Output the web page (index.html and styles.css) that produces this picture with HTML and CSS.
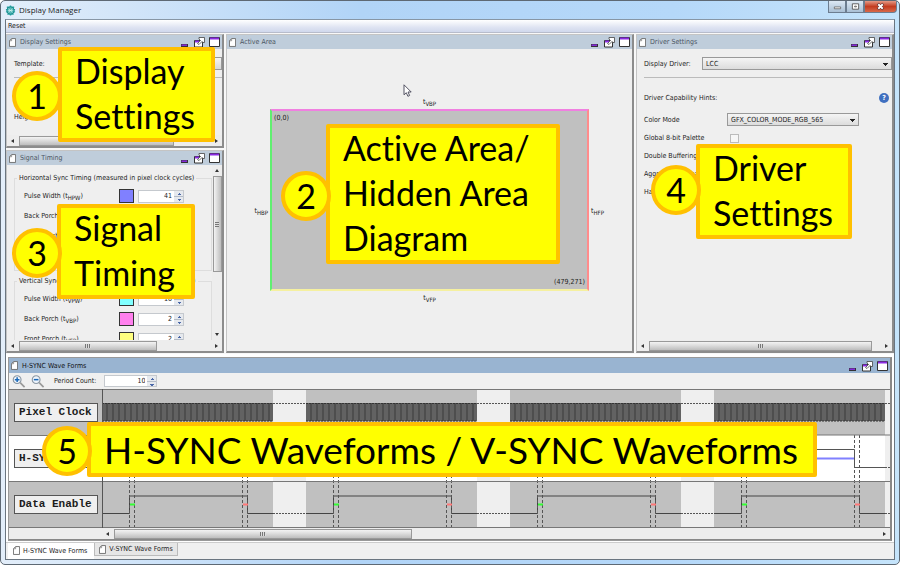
FILE: index.html
```html
<!DOCTYPE html>
<html lang="en">
<head>
<meta charset="utf-8">
<title>Display Manager</title>
<link rel="stylesheet" href="styles.css">
</head>
<body>
<svg class="defs" aria-hidden="true">
  <symbol id="doc" viewBox="0 0 8 10"><path d="M3 .5h4.5v9h-7V3z" fill="#fff" stroke="#666"/><path d="M3 .5V3H.5" fill="none" stroke="#888"/></symbol>
  <symbol id="tools" viewBox="0 0 40 12">
    <path d="M1 9.500h7" stroke="#333" stroke-width="3"/><path d="M1.500 9.200h5.500" stroke="#8a2be2" stroke-width="1.500"/>
    <path d="M14.500 4.500h8v6.500h-8z" fill="#fff" stroke="#333"/><path d="M15 5.500h4" stroke="#8a2be2" stroke-width="2"/>
    <path d="M17.500 7.500l3-3-1.500-1.500V1.500h5.500v5h-1.500l-1-1-3 3z" fill="#fff" stroke="#444" stroke-width=".8"/>
    <path d="M29.500 1.500h10v9h-10z" fill="#fff" stroke="#333"/><path d="M30 2.500h9" stroke="#8a2be2" stroke-width="2"/>
  </symbol>
  <symbol id="zoomglass" viewBox="0 0 15 14"><path d="M8.500 8l5 5" stroke="#999" stroke-width="1.800"/><circle cx="5.500" cy="5" r="4.200" fill="#eef4fb" stroke="#8b97a3" stroke-width="1.200"/></symbol>
</svg>
<main class="window">
  <header class="titlebar">
    <svg class="logo" viewBox="0 0 12 12"><path d="M2 2.500h8M1 5h10M1 7.500h10M2.500 10h7M6 .5v11" stroke="#27a3a3" stroke-width="1.500"/><circle cx="6" cy="6" r="4" fill="#55b9b9" stroke="#168c8c"/><path d="M3.500 6h5M4 4.300l4 3.400M8 4.300L4 7.700" stroke="#d8f2f0" stroke-width=".7"/></svg>
    <h1>Display Manager</h1>
    <div class="winbtns">
      <button aria-label="Minimize"><svg viewBox="0 0 10 10"><path d="M1.500 5.500h7v2h-7z" fill="#fff" stroke="#555" stroke-width=".8"/></svg></button>
      <button aria-label="Maximize"><svg viewBox="0 0 10 10"><path d="M1.500 2h7v6h-7z" fill="#fff" stroke="#555"/><path d="M4 4.500h2v1h-2z" fill="#ddd" stroke="#555" stroke-width=".8"/></svg></button>
      <button class="close" aria-label="Close"><svg viewBox="0 0 10 10"><path d="M2 2l6 6M8 2l-6 6" stroke="#5b3030" stroke-width="3.200"/><path d="M2.500 2.500l5 5M7.500 2.500l-5 5" stroke="#fff" stroke-width="2"/></svg></button>
    </div>
  </header>
  <div class="client">
    <nav class="menubar"><button>Reset</button></nav>
    <div class="workspace">
      <div class="left">
        <section class="panel display">
          <header class="phead"><svg class="doc"><use href="#doc"/></svg><h2>Display Settings</h2><svg class="tools"><use href="#tools"/></svg></header>
          <div class="pbody">
            <div class="drow"><label for="tpl">Template:</label><select id="tpl"><option></option></select></div>
            <hr>
            <div class="drow height"><label for="hgt">Height:</label><input id="hgt" type="text" value="272"></div>
          </div>
          <div class="hscroll"><i class="al"></i><b class="thumb"></b><i class="ar"></i></div>
          <div class="callout c1"><p>Display<br>Settings</p><span>1</span></div>
        </section>
        <section class="panel signal">
          <header class="phead"><svg class="doc"><use href="#doc"/></svg><h2>Signal Timing</h2><svg class="tools"><use href="#tools"/></svg></header>
          <div class="scrollpair">
            <div class="groups">
              <fieldset class="g1"><legend>Horizontal Sync Timing (measured in pixel clock cycles)</legend>
                <div class="srow"><label for="hpw">Pulse Width (t<sub>HPW</sub>)</label><i class="sw blue"></i><span class="spin"><input id="hpw" type="text" value="41"><u></u></span></div>
                <div class="srow"><label for="hbp">Back Porch (t<sub>HBP</sub>)</label><i class="sw green"></i><span class="spin"><input id="hbp" type="text" value="2"><u></u></span></div>
                <div class="srow"><label for="hfp">Front Porch (t<sub>HFP</sub>)</label><i class="sw red"></i><span class="spin"><input id="hfp" type="text" value="2"><u></u></span></div>
              </fieldset>
              <fieldset class="g2"><legend>Vertical Sync Timing (measured in horizontal sync lines)</legend>
                <div class="srow"><label for="vpw">Pulse Width (t<sub>VPW</sub>)</label><i class="sw cyan"></i><span class="spin"><input id="vpw" type="text" value="10"><u></u></span></div>
                <div class="srow"><label for="vbp">Back Porch (t<sub>VBP</sub>)</label><i class="sw pink"></i><span class="spin"><input id="vbp" type="text" value="2"><u></u></span></div>
                <div class="srow"><label for="vfp">Front Porch (t<sub>VFP</sub>)</label><i class="sw yellow"></i><span class="spin"><input id="vfp" type="text" value="2"><u></u></span></div>
              </fieldset>
            </div>
            <div class="vscroll"><i class="au"></i><b class="thumb"></b><i class="ad"></i></div>
          </div>
          <div class="hscroll"><i class="al"></i><b class="thumb grip"></b><i class="ar"></i></div>
          <div class="callout c3"><p>Signal<br>Timing</p><span>3</span></div>
        </section>
      </div>
      <section class="panel active">
        <header class="phead"><svg class="doc"><use href="#doc"/></svg><h2>Active Area</h2><svg class="tools"><use href="#tools"/></svg></header>
        <div class="diagram">
          <div class="edge top">t<sub>VBP</sub></div>
          <div class="edge lft">t<sub>HBP</sub></div>
          <div class="area"><span>(0,0)</span><span class="end">(479,271)</span></div>
          <div class="edge rgt">t<sub>HFP</sub></div>
          <div class="edge bot">t<sub>VFP</sub></div>
        </div>
        <svg class="cursor" viewBox="0 0 9 13"><path d="M1 .8v10l2.300-2.100 1.600 3.600 1.700-.8-1.600-3.500h3.200z" fill="#fff" stroke="#445" stroke-width=".9"/></svg>
        <div class="callout c2"><p>Active Area/<br>Hidden Area<br>Diagram</p><span>2</span></div>
      </section>
      <section class="panel driver">
        <header class="phead"><svg class="doc"><use href="#doc"/></svg><h2>Driver Settings</h2><svg class="tools"><use href="#tools"/></svg></header>
        <div class="pbody">
          <div class="lcc"><label for="drv">Display Driver:</label><select id="drv"><option>LCC</option></select></div>
          <hr>
          <div class="hints"><span>Driver Capability Hints:</span><button class="help" aria-label="Help">?</button></div>
          <div class="mode"><label for="cm">Color Mode</label><select id="cm"><option>GFX_COLOR_MODE_RGB_565</option></select></div>
          <div class="chk"><label for="k1">Global 8-bit Palette</label><input id="k1" type="checkbox" disabled></div>
          <div class="chk"><label for="k2">Double Buffering</label><input id="k2" type="checkbox"></div>
          <div class="chk"><label for="k3">Aggressive Alpha</label><input id="k3" type="checkbox"></div>
          <div class="chk"><label for="k4">Hardware</label><input id="k4" type="checkbox"></div>
        </div>
        <div class="hscroll"><i class="al"></i><b class="thumb grip"></b><i class="ar"></i></div>
        <div class="callout c4"><p>Driver<br>Settings</p><span>4</span></div>
      </section>
    </div>
    <section class="waves">
      <div class="wframe">
        <header class="phead focus"><svg class="doc"><use href="#doc"/></svg><h2>H-SYNC Wave Forms</h2><svg class="tools"><use href="#tools"/></svg></header>
        <div class="toolbar">
          <button aria-label="Zoom in"><svg viewBox="0 0 15 14"><use href="#zoomglass"/><path d="M3 5h5M5.500 2.500v5" stroke="#1767b8" stroke-width="1.600"/></svg></button>
          <button aria-label="Zoom out"><svg viewBox="0 0 15 14"><use href="#zoomglass"/><path d="M3 5h5" stroke="#1767b8" stroke-width="1.600"/></svg></button>
          <label for="pc">Period Count:</label><span class="spin"><input id="pc" type="text" value="10"><u></u></span>
        </div>
        <div class="scope">
          <div class="names"><div><b>Pixel Clock</b></div><div class="white"><b>H-SYNC</b></div><div><b>Data Enable</b></div></div>
          <svg class="plot" viewBox="0 0 788 139" preserveAspectRatio="none">
            <defs>
              <pattern id="clk" width="6" height="18" patternUnits="userSpaceOnUse"><path d="M0 0h6v18h-6z" fill="#4e4e4e"/><path d="M0 0h4v18h-4z" fill="#626262"/></pattern>
              <g id="period">
                <path d="M0 0h171v139h-171z" fill="#c0c0c0"/>
                <path d="M0 46h171v46h-171z" fill="#fff"/>
                <path d="M0 14h171v18h-171z" fill="url(#clk)"/>
                <path d="M0 14.500h171M0 32h171" stroke="#333" stroke-dasharray="2 1"/>
                <path d="M171 14.500h33M171 124.500h33M171 78.500h33" stroke="#555" stroke-dasharray="2 1"/>
                <path d="M0 78.500h28.500v-18h112v18h30.500" fill="none" stroke="#555"/>
                <path d="M28 69.500h112" stroke="#8080ff" stroke-width="2"/>
                <path d="M0 124.500h27.500v-17.500h118v17.500h25.500" fill="none" stroke="#444"/>
                <path d="M27.500 46v93M32.500 46v93M140.500 46v93M145.500 46v93" stroke="#555" stroke-dasharray="3 2"/>
                <path d="M28 115.500h5" stroke="#3f3" stroke-width="2"/>
                <path d="M141 115.500h5" stroke="#f77" stroke-width="2"/>
              </g>
            </defs>
            <path d="M0 0h788v139h-788z" fill="#efefef"/>
            <use href="#period"/><use href="#period" x="204"/><use href="#period" x="408"/><use href="#period" x="612"/>
            <path d="M0 .5h788M0 46h788M0 92.500h788M0 138.500h788" stroke="#777"/>
            <path d="M.5 0v139" stroke="#555"/>
          </svg>
        </div>
        <div class="hscroll"><i class="al"></i><b class="thumb grip"></b><i class="ar"></i></div>
        <div class="callout c5"><p>H-SYNC Waveforms / V-SYNC Waveforms</p><span>5</span></div>
      </div>
      <nav class="tabs"><button class="on"><svg class="doc"><use href="#doc"/></svg>H-SYNC Wave Forms</button><button><svg class="doc"><use href="#doc"/></svg>V-SYNC Wave Forms</button></nav>
    </section>
  </div>
</main>
</body>
</html>
```
FILE: styles.css
```css
* { box-sizing: border-box; }
body { margin: 0; background: #fff; color: #1c1c1c; font: 7px/10px "DejaVu Sans Condensed", "DejaVu Sans", sans-serif; }
button, input, select { font: inherit; color: inherit; margin: 0; }
button { border: 0; padding: 0; background: none; }
h1, h2, p { margin: 0; font-weight: normal; }
i, u { font-style: normal; text-decoration: none; }
sub { font-size: 6px; line-height: 0; vertical-align: -2px; }
.defs { position: absolute; width: 0; height: 0; }
.window { min-height: 100vh; display: flex; flex-direction: column; padding: 0 4px 4px; border: 1px solid #5e6974; border-radius: 5px; background: linear-gradient(90deg, #e3eefa, #b1d4f7 40%, #b5d8f9 75%, #c5e4fb); }
.titlebar { height: 18px; display: flex; align-items: center; gap: 3px; }
.logo { width: 11px; height: 11px; }
h1 { flex: 1; font: 8px/12px "Open Sans", sans-serif; }
.winbtns { display: flex; align-self: flex-start; margin-right: -2px; }
.winbtns button { width: 18px; height: 12px; border: 1px solid #6c7d90; border-top: 0; background: linear-gradient(#dce8f4, #a9bfd4); display: flex; align-items: center; justify-content: center; }
.winbtns svg { width: 9px; height: 9px; }
.winbtns .close { width: 33px; background: linear-gradient(#e59a86, #c33c20 50%, #d8694a); border-radius: 0 0 4px 0; }
.client { flex: 1; display: flex; flex-direction: column; border: 1px solid #6a7580; border-top-color: #8796a5; background: #f0f0f0; }
.menubar { height: 13px; padding: 1px 2px; background: linear-gradient(#fff, #dfe4f2 60%, #d0d8ec); border-bottom: 1px solid #b7bccb; }
.menubar button { display: block; }
.workspace { flex: 1; display: grid; grid-template-columns: 218px 1fr 258px; gap: 2px; padding: 1px 0 1px; background: #f8f8f8; }
.left { display: grid; grid-template-rows: 114px 1fr; gap: 2px; }
.panel { position: relative; min-width: 0; display: flex; flex-direction: column; background: #efefef; border: 1px solid #c4c4c4; border-right: 2px solid #8c8c8c; border-bottom: 2px solid #8c8c8c; }
.phead { height: 14px; flex: none; display: flex; align-items: center; padding: 0 2px; gap: 4px; background: #bfcddb; color: #4c5663; }
.phead h2 { flex: 1; font-size: 7px; }
.focus { height: 15px; background: #99b4d1; color: #111; }
.doc { width: 7px; height: 9px; flex: none; }
.tools { width: 40px; height: 12px; }
.pbody { flex: 1; overflow: hidden; padding: 8px 0 0 7px; }
hr { margin: 0; border: 0; height: 1px; background: #bbb; }
select { appearance: none; height: 13px; padding: 0 3px; border: 1px solid #999; border-radius: 0; background: linear-gradient(#f5f5f5, #d8d8d8); }
.drow { display: flex; align-items: center; gap: 10px; margin-bottom: 7px; }
.drow label { width: 50px; }
.drow select { flex: 1; }
.drow input { width: 60px; height: 12px; border: 1px solid #bbb; }
.height { margin-top: 33px; }
.hscroll { height: 11px; flex: none; display: flex; align-items: center; padding: 0 4px; background: #ededed; }
.thumb { display: block; height: 10px; border: 1px solid #999; background: linear-gradient(#f3f3f3, #dcdcdc 45%, #bdbdbd); }
.grip { display: flex; justify-content: center; align-items: center; }
.grip::after { content: ""; width: 6px; height: 4px; background: repeating-linear-gradient(90deg, #777 0 1px, #ddd 1px 2px); }
.al, .ar { border: 2px solid transparent; flex: none; }
.al { border-right: 3px solid #333; border-left: 0; margin-right: 5px; }
.ar { border-left: 3px solid #333; border-right: 0; margin-left: auto; }
.display .thumb { width: 155px; }
.signal .thumb.grip { width: 138px; }
.driver .thumb { flex: 1; margin-right: 13px; }
.scrollpair { flex: 1 1 0; min-height: 0; display: flex; overflow: hidden; }
.groups { flex: 1; padding: 8px 0 0 7px; min-width: 0; height: 164px; }
.vscroll { width: 10px; display: flex; flex-direction: column; align-items: center; padding: 4px 0; background: #ededed; }
.vscroll .thumb { width: 9px; height: 96px; margin-top: 4px; background: linear-gradient(90deg, #f3f3f3, #bdbdbd); display: flex; align-items: center; justify-content: center; }
.vscroll .thumb::after { content: ""; width: 4px; height: 5px; background: repeating-linear-gradient(#777 0 1px, #ddd 1px 2px); }
.au, .ad { border: 2px solid transparent; }
.au { border-bottom: 3px solid #333; border-top: 0; }
.ad { border-top: 3px solid #333; border-bottom: 0; margin-top: auto; }
fieldset { margin: 0; padding: 3px 0 0 9px; border: 1px solid #ddd; min-width: 0; }
.g1 { height: 98px; margin-bottom: 5px; }
legend { padding: 0 2px; margin-left: -7px; white-space: nowrap; }
.srow { display: flex; align-items: center; height: 20px; }
.srow label { width: 95px; white-space: nowrap; }
.sw { width: 15px; height: 14px; border: 1px solid #333; margin-right: 4px; }
.blue { background: #8080ff; } .green { background: #80ff80; } .red { background: #ff8080; }
.cyan { background: #80ffff; } .pink { background: #ff80ee; } .yellow { background: #ffff80; }
.spin { width: 46px; height: 13px; display: flex; background: #fff; border: 1px solid #c5c9ce; }
.spin input { flex: 1; min-width: 0; border: 0; padding: 0 2px; background: none; text-align: right; }
.spin u { width: 9px; background: linear-gradient(#b4bcc8, #b4bcc8) 50% 50% / 9px 1px no-repeat, conic-gradient(from 135deg at 50% 0, #4a68a8 90deg, transparent 0) 50% 2px / 4px 2px no-repeat, conic-gradient(from -45deg at 50% 100%, #4a68a8 90deg, transparent 0) 50% 8px / 4px 2px no-repeat, #e6e9ee; }
.diagram { flex: 1; display: grid; grid-template-columns: 43px 1fr 43px; grid-template-rows: 60px 1fr 60px; }
.area { grid-area: 2 / 2; background: #c0c0c0; border: 2px solid; border-color: #f080e0 #ff8c8c #f5f0a0 #60f070; display: flex; flex-direction: column; justify-content: space-between; padding: 2px; }
.area .end { align-self: flex-end; }
.edge { text-align: center; }
.top { grid-area: 1 / 2; align-self: end; padding-bottom: 2px; }
.lft { grid-area: 2 / 1; align-self: center; text-align: right; padding: 22px 2px 0 0; }
.rgt { grid-area: 2 / 3; align-self: center; text-align: left; padding: 22px 0 0 2px; }
.bot { grid-area: 3 / 2; padding-top: 2px; }
.cursor { position: absolute; left: 176px; top: 49px; width: 9px; height: 13px; }
.lcc { display: flex; align-items: center; gap: 10px; margin-bottom: 7px; white-space: nowrap; }
.lcc label { width: 48px; }
.lcc select { flex: 1; min-width: 0; }
.lcc select, .mode select { background: conic-gradient(from -45deg at 50% 100%, #222 90deg, transparent 0) right 3px top 5px / 5px 3px no-repeat, linear-gradient(#f5f5f5, #dcdcdc); }
.hints { display: flex; justify-content: space-between; align-items: center; margin-top: 14px; padding-right: 3px; height: 11px; }
.help { width: 10px; height: 10px; border-radius: 50%; background: #3f6fc0; color: #fff; font-weight: bold; line-height: 10px; }
.mode { display: flex; align-items: center; margin: 10px 0 3px; }
.mode label, .chk label { width: 83px; white-space: nowrap; }
.mode select { width: 132px; }
.chk { display: flex; align-items: center; height: 18px; }
.chk input { appearance: none; width: 9px; height: 9px; margin-left: 3px; border: 1px solid #bbb; background: #f6f6f6; }
.callout { position: absolute; z-index: 2; height: 95px; display: flex; align-items: center; background: #ff0; border: 4px solid #ffc000; border-radius: 2px; color: #000; font: 34px/45px Lato, sans-serif; font-variant-ligatures: none; white-space: nowrap; }
.callout p { padding: 0 0 3px 13px; }
.callout span { position: absolute; left: -50px; top: 20px; width: 50px; height: 50px; border: 4px solid #ffc000; border-radius: 50%; background: #ff0; text-align: center; line-height: 42px; }
.c1 { left: 51px; top: 12px; width: 157px; }
.c2 { left: 99px; top: 89px; width: 234px; height: 140px; }
.c2 span { top: 43px; left: -49px; }
.c3 { left: 50px; top: 53px; width: 138px; }
.c3 span { left: -49px; }
.c4 { left: 59px; top: 109px; width: 156px; }
.c4 span { top: 17px; left: -49px; }
.c5 { left: 78px; top: 64px; width: 730px; height: 55px; font-size: 37px; }
.c5 p { padding-bottom: 0; }
.c5 span { top: 0; left: -49px; font-size: 34px; }
.waves { flex: none; background: #fff; padding: 3px 2px 0; }
.wframe { position: relative; border: 1px solid #999; border-right: 2px solid #888; }
.toolbar { height: 16px; display: flex; align-items: center; background: #f0f0f0; padding-left: 3px; }
.toolbar button { width: 14px; height: 13px; margin-right: 5px; }
.toolbar svg { display: block; width: 14px; height: 13px; }
.toolbar label { margin: 0 8px 0 4px; }
.toolbar .spin { width: 53px; height: 12px; }
.scope { display: flex; height: 139px; }
.names { width: 93px; display: grid; grid-template-rows: 46px 1fr 46px; border-top: 1px solid #777; }
.names div { background: #c0c0c0; border-bottom: 1px solid #777; display: flex; align-items: center; padding-left: 5px; }
.names .white { background: #fff; }
.names b { width: 84px; height: 19px; border: 1px solid #555; background: #efefef; padding-left: 4px; font: bold 11px/17px "Liberation Mono", monospace; }
.plot { flex: 1; min-width: 0; height: 139px; }
.wframe .hscroll { padding-left: 97px; border-bottom: 1px solid #888; height: 12px; }
.wframe .thumb { width: 298px; }
.tabs { display: flex; margin: 1px -2px 0; padding: 0 2px; background: #f0f0f0; border-top: 1px solid #ccc; height: 17px; align-items: flex-start; }
.tabs button { display: flex; align-items: center; gap: 3px; height: 13px; padding: 0 4px; border: 1px solid #bbb; border-top: 0; background: #e6e6e6; white-space: nowrap; }
.tabs .on { height: 16px; padding-right: 6px; background: #fff; border-color: #fff; }
```
